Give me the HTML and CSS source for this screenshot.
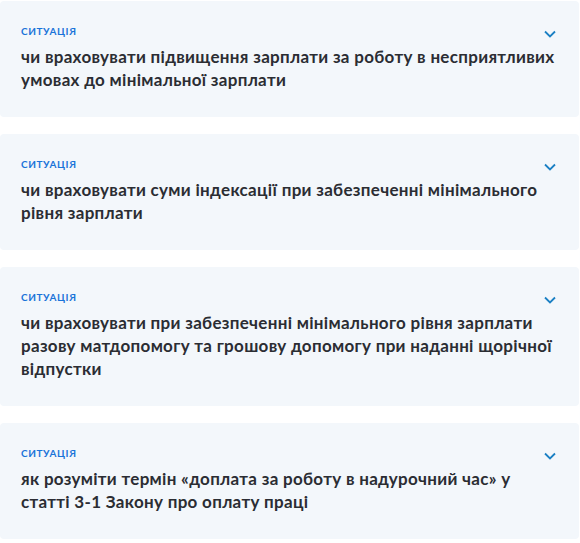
FILE: index.html
```html
<!DOCTYPE html>
<html lang="uk">
<head>
<meta charset="utf-8">
<link rel="stylesheet" href="styles.css">
</head>
<body>
<div class="list">
  <div class="card">
    <div class="head">
      <span class="label">Ситуація</span>
      <svg class="chev" width="12" height="8" viewBox="0 0 12 8"><path d="M1 1.5 L6 6.5 L11 1.5" fill="none" stroke="#1b80c4" stroke-width="1.8"/></svg>
    </div>
    <div class="title">чи враховувати підвищення зарплати за роботу в несприятливих умовах до мінімальної зарплати</div>
  </div>
  <div class="card">
    <div class="head">
      <span class="label">Ситуація</span>
      <svg class="chev" width="12" height="8" viewBox="0 0 12 8"><path d="M1 1.5 L6 6.5 L11 1.5" fill="none" stroke="#1b80c4" stroke-width="1.8"/></svg>
    </div>
    <div class="title">чи враховувати суми індексації при забезпеченні мінімального рівня зарплати</div>
  </div>
  <div class="card">
    <div class="head">
      <span class="label">Ситуація</span>
      <svg class="chev" width="12" height="8" viewBox="0 0 12 8"><path d="M1 1.5 L6 6.5 L11 1.5" fill="none" stroke="#1b80c4" stroke-width="1.8"/></svg>
    </div>
    <div class="title">чи враховувати при забезпеченні мінімального рівня зарплати разову матдопомогу та грошову допомогу при наданні щорічної відпустки</div>
  </div>
  <div class="card">
    <div class="head">
      <span class="label">Ситуація</span>
      <svg class="chev" width="12" height="8" viewBox="0 0 12 8"><path d="M1 1.5 L6 6.5 L11 1.5" fill="none" stroke="#1b80c4" stroke-width="1.8"/></svg>
    </div>
    <div class="title">як розуміти термін «доплата за роботу в надурочний час» у статті 3-1 Закону про оплату праці</div>
  </div>
</div>
</body>
</html>
```
FILE: styles.css
```css
html, body {
  margin: 0;
  padding: 0;
  background: #ffffff;
}
body {
  font-family: "Lato", "Noto Sans", sans-serif;
}
.list {
  display: flex;
  flex-direction: column;
  gap: 17px;
  padding-top: 1px;
  width: 579px;
}
.card {
  background: #f3f7fb;
  border-radius: 4px;
  padding: 22px 22px 26px 21px;
}
.head {
  display: flex;
  justify-content: space-between;
  align-items: center;
  height: 16px;
}
.label {
  font-size: 10px;
  font-weight: 700;
  text-transform: uppercase;
  color: #1a73d9;
  letter-spacing: 0.6px;
}
.chev {
  margin-right: 1px;
  margin-top: 6px;
}
.title {
  margin-top: 6px;
  font-size: 17px;
  line-height: 23px;
  font-weight: 700;
  color: #2b2d33;
  padding-right: 0;
  letter-spacing: 0.3px;
}
```
